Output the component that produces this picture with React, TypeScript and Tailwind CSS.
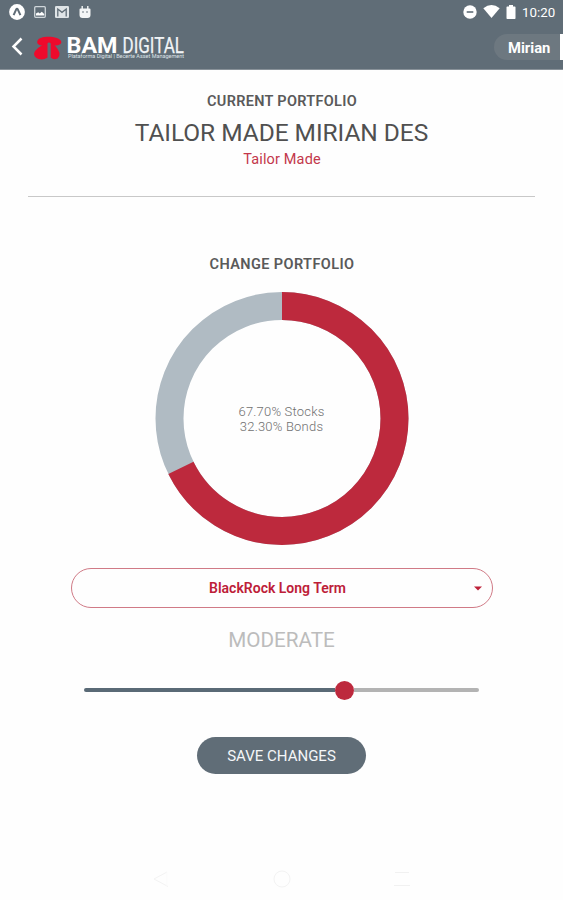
const SLATE = '#606d77';

function StatusBar() {
  return (
    <div className="flex h-6 items-center justify-between pl-[9px] pr-[7px]">
      <div className="flex items-center">
        <svg width="16" height="16" viewBox="0 0 16 16">
          <circle cx="8" cy="8" r="7.9" fill="#fff" />
          <path d="M4.600 11.200 7.100 5.600q.9-1.500 1.800 0l2.500 5.600" fill="none" stroke={SLATE} strokeWidth="2" />
        </svg>
        <svg className="ml-[9px]" width="12" height="12" viewBox="0 0 12 12">
          <rect x=".7" y=".7" width="10.6" height="10.6" rx="1" fill="none" stroke="#cfd6da" strokeWidth="1.3" />
          <path d="M2 9.500V7.500L4.200 6.300 5.700 7.400 7.800 5.800 10.200 8V9.500z" fill="#fff" />
        </svg>
        <svg className="ml-[9px]" width="14" height="12" viewBox="0 0 14 12">
          <rect width="14" height="12" rx="1.3" fill="#dfe4e7" />
          <path d="M2.800 10.500V3L7 6.300 11.200 3v7.500" fill="none" stroke={SLATE} strokeWidth="1.300" />
        </svg>
        <svg className="ml-[10px]" width="12" height="14" viewBox="0 0 12 14">
          <path d="M.5 4.500a1 1 0 0 1 1-1h1V1h1.400v2.500h4.200V1h1.400v2.500h1a1 1 0 0 1 1 1V10q0 3-3 3h-5q-3 0-3-3z" fill="#f3f5f6" />
          <circle cx="4" cy="7" r=".8" fill={SLATE} />
          <circle cx="8" cy="7" r=".8" fill={SLATE} />
        </svg>
      </div>
      <div className="flex items-center">
        <svg width="14" height="14" viewBox="0 0 14 14">
          <circle cx="7" cy="7" r="6.7" fill="#fff" />
          <path d="M3.700 7h6.600" stroke={SLATE} strokeWidth="1.6" />
        </svg>
        <svg className="ml-[6px]" width="17" height="13" viewBox="0 0 17 13">
          <path d="M.3 3.200Q8.500-3 16.700 3.200L8.500 13z" fill="#fff" />
        </svg>
        <svg className="ml-[6px]" width="10" height="14" viewBox="0 0 10 14">
          <path d="M1.200 1.500H3V0h4v1.500h1.800q.7 0 .7.700v11q0 .8-.7.800H1.200q-.7 0-.7-.8v-11q0-.7.7-.7z" fill="#fff" />
        </svg>
        <span className="ml-[6px] w-[34px] whitespace-nowrap pt-px text-[13.300px] leading-none text-white">10:20</span>
      </div>
    </div>
  );
}

function Logo() {
  return (
    <svg className="overflow-visible" width="156" height="28" viewBox="0 0 156 28" role="img" aria-label="BAM Digital">
      <g fill="#ee0a2c">
        <path d="M13 9.500C10 13 3 11.500 3.200 8 3.400 4 9 2.700 14.500 2.700S27 4.500 27.300 8C27.600 11.500 19 13 17 9.500Q15 7.700 13 9.500z" />
        <path d="M13.500 8.300V23.500Q9.500 26.300 4.500 25 0 23.400 0 19.500 1 14.500 13.500 8.300z" />
        <path d="M15.300 7.800 16.700 8.500V23.500Q19.500 26.300 23.500 24.500 26 22 25.500 19 24 14 17.500 8.300z" />
      </g>
      <text x="32.500" y="18.800" textLength="51" lengthAdjust="spacingAndGlyphs" fill="#fff" fontFamily="Roboto, sans-serif" fontWeight="700" fontSize="21.500">BAM</text>
      <text x="88.500" y="18.800" textLength="61.500" lengthAdjust="spacingAndGlyphs" fill="#f1f4f6" stroke="#f1f4f6" strokeWidth=".25" fontFamily="Roboto, sans-serif" fontSize="21.500">DIGITAL</text>
      <text x="34" y="24.200" textLength="116" lengthAdjust="spacingAndGlyphs" fill="#dce2e6" fontFamily="Roboto, sans-serif" fontSize="5.200">Plataforma Digital | Becerte Asset Management</text>
    </svg>
  );
}

function Header() {
  return (
    <header className="h-[70px] border-b border-[#899299] bg-[#606d77]">
      <StatusBar />
      <div className="flex h-[45px] items-center">
        <svg className="ml-[11px]" width="14" height="20" viewBox="0 0 14 20">
          <path d="M10.500 1.500 2.500 9.500l8 8" fill="none" stroke="#fff" strokeWidth="2.500" />
        </svg>
        <div className="ml-[9px] mt-[2px]"><Logo /></div>
        <div className="ml-auto mt-px flex h-[26px] w-[66px] items-center whitespace-nowrap rounded-l-full bg-[#6d7880] pl-[14px] pt-[2px] text-[14.800px] font-bold text-white">Mirian</div>
        <div className="mt-px h-[26px] w-[3px] bg-white" />
      </div>
    </header>
  );
}

function Donut() {
  const r = 112.5;
  const length = 2 * Math.PI * r;
  return (
    <div className="mt-[17px] grid size-[254px] place-items-center">
      <svg className="col-start-1 row-start-1" width="254" height="254" viewBox="0 0 254 254">
        <g fill="none" strokeWidth="28" transform="rotate(-90 127 126.500)">
          <circle cx="127" cy="126.500" r={r} stroke="#b0bbc3" />
          <circle cx="127" cy="126.500" r={r} stroke="#bd293d" strokeDasharray={`${length * 0.677} ${length}`} />
        </g>
      </svg>
      <div className="col-start-1 row-start-1 text-center text-[13px] font-light leading-[15px] tracking-[0.200px] text-[#707070]">
        <div>67.70% Stocks</div>
        <div>32.30% Bonds</div>
      </div>
    </div>
  );
}

function NavBar() {
  return (
    <nav className="mt-auto flex h-[42px] w-full justify-between pl-[153px] pr-[152px]">
      <svg width="18" height="42" viewBox="0 0 18 42" fill="none" stroke="#f3f3f3"><path d="M14 14 1 21l14 7.500" /><path d="M14 14v14" stroke="#fbfbfb" /></svg>
      <svg width="18" height="42" viewBox="0 0 18 42" fill="none" stroke="#f3f3f3"><circle cx="9" cy="21" r="8" /></svg>
      <svg width="18" height="42" viewBox="0 0 18 42" fill="none" stroke="#f1f1f1"><path d="M2 14.500h14M1 27.500h16" /></svg>
    </nav>
  );
}

export default function App() {
  return (
    <div className="flex h-[900px] w-[563px] flex-col overflow-hidden bg-[#fefefe] font-[Roboto,sans-serif]">
      <Header />
      <main className="flex flex-1 flex-col items-center">
        <h2 className="mt-[22px] h-5 whitespace-nowrap pl-px text-[14.500px] font-semibold leading-5 tracking-[0.300px] text-[#5a5a5a]">CURRENT PORTFOLIO</h2>
        <h1 className="mt-[6px] h-[30px] whitespace-nowrap text-[24.500px] leading-[30px] tracking-[-0.050px] text-[#505050]">TAILOR MADE MIRIAN DES</h1>
        <p className="mt-[2px] h-5 whitespace-nowrap pl-px text-[14.500px] leading-5 tracking-[0.150px] text-[#c3374b]">Tailor Made</p>
        <hr className="mt-[26px] h-px w-[507px] border-0 bg-[#c8c8c8]" />
        <h2 className="mt-[58px] h-5 whitespace-nowrap pl-px text-[14.500px] font-semibold leading-5 tracking-[0.400px] text-[#5a5a5a]">CHANGE PORTFOLIO</h2>
        <Donut />
        <button className="mt-[22px] flex h-[40px] w-[422px] items-center rounded-full border border-[#d07a86] pr-[10px] text-[14px] font-semibold text-[#bd2038]">
          <span className="flex-1 pl-[10px] text-center">BlackRock Long Term</span>
          <svg width="8" height="5" viewBox="0 0 8 5"><path d="M0 .5h8l-4 4z" fill="#bd2038" /></svg>
        </button>
        <div className="mt-[17px] h-[30px] text-[20.700px] leading-[30px] text-[#bcbcbc]">MODERATE</div>
        <div className="mt-[25px] flex h-5 w-[395px] items-center">
          <div className="h-1 w-[251px] rounded-l-full bg-[#5a6a76]" />
          <div className="size-[19px] rounded-full bg-[#bd293d]" />
          <div className="h-1 flex-1 rounded-r-full bg-[#b3b3b3]" />
        </div>
        <button className="mt-[37px] h-[37px] w-[169px] rounded-full bg-[#606d77] pt-[2px] text-[15px] text-[#f4f6f8]">SAVE CHANGES</button>
        <NavBar />
      </main>
    </div>
  );
}
